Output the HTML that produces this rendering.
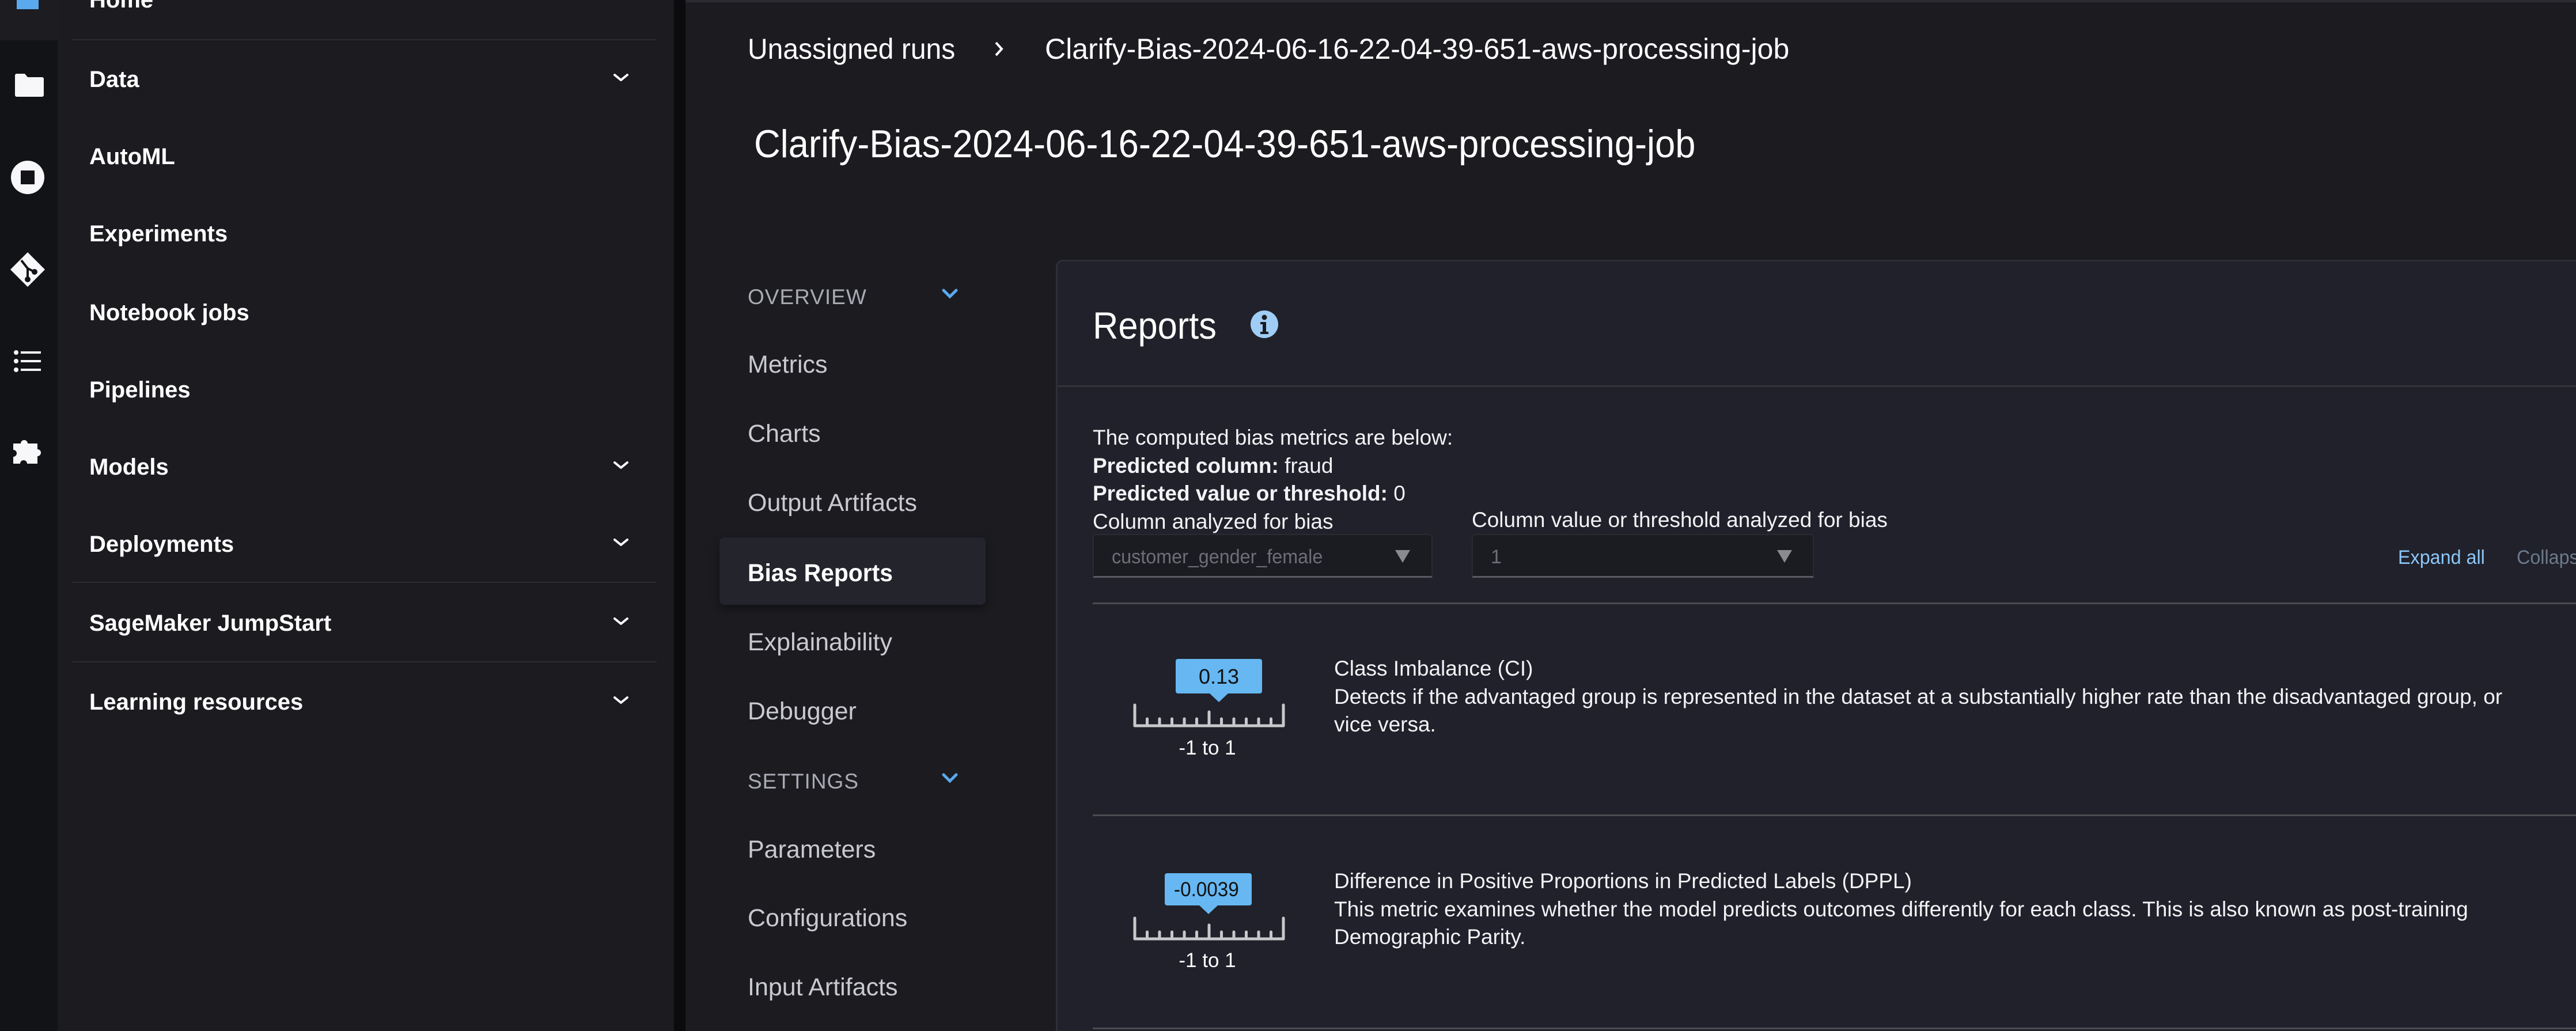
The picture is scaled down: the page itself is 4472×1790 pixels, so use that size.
<!DOCTYPE html>
<html style="overflow:hidden;width:4472px;height:1790px"><head><meta charset="utf-8">
<style>
*{margin:0;padding:0;box-sizing:border-box}
body{width:4472px;height:1790px;overflow:hidden;background:#1b1b20;font-family:"Liberation Sans",sans-serif;color:#f2f3f5;position:relative}
.a{position:absolute;white-space:nowrap;line-height:1}
.sq{transform-origin:0 0;display:inline-block}
.nav{font-weight:bold;font-size:40px;color:#fff;left:155px}
.ln{position:absolute;left:126px;width:1014px;height:2px;background:#2c2c32}
.sub{font-size:43px;color:#c9cad0;left:1298px}
.sec{font-size:37px;color:#a9abb3;left:1298px;letter-spacing:1px}
.dv{position:absolute;left:1897px;right:0;height:3px;background:#4a4b52}
</style></head><body>
<!-- icon strip -->
<div style="position:absolute;left:0;top:0;width:100px;height:1790px;background:#121316"></div>
<div style="position:absolute;left:0;top:0;width:100px;height:70px;background:#1c1c21"></div>
<div style="position:absolute;left:29px;top:0;width:38px;height:16px;background:#5aa9ef"></div>
<svg class="a" style="left:0;top:0" width="100" height="900">
 <g fill="#f7f7f9">
  <path d="M26 128 h17 l5 6 h25 a3 3 0 0 1 3 3 v28 a3 3 0 0 1 -3 3 h-44 a3 3 0 0 1 -3 -3 v-34 a3 3 0 0 1 3 -3z"/>
  <circle cx="48" cy="308" r="29"/>
  <path d="M48 438 L78 468 L48 498 L18 468Z"/>
  <circle cx="28" cy="612" r="4"/><circle cx="28" cy="627" r="4"/><circle cx="28" cy="642" r="4"/>
  <rect x="36" y="610" width="35" height="4"/><rect x="36" y="625" width="35" height="4"/><rect x="36" y="640" width="35" height="4"/>
  <path d="M23 770 h13 a6 6 0 1 1 12 0 h17 v10 a6 6 0 1 1 0 12 v13 h-18 a6 6 0 1 0 -12 0 h-12 v-12 a6 6 0 1 0 0 -12z"/>
 </g>
 <rect x="36" y="296" width="24" height="24" fill="#121316"/>
 <path d="M37 452 L48 466 M48 466 V484 M48 466 L60 472" stroke="#121316" stroke-width="4" fill="none"/>
 <circle cx="48" cy="485" r="5" fill="#121316"/><circle cx="60" cy="472" r="5" fill="#121316"/>
</svg>
<!-- sidebar -->
<div style="position:absolute;left:100px;top:0;width:1070px;height:1790px;background:#1b1b20"></div>
<div style="position:absolute;left:1170px;top:0;width:20px;height:1790px;background:#0b0b0d"></div>
<div class="a nav" style="top:-20px">Home</div>
<div class="ln" style="top:68px"></div>
<div class="a nav" style="top:118px">Data</div>
<div class="a nav" style="top:252px">AutoML</div>
<div class="a nav" style="top:386px">Experiments</div>
<div class="a nav" style="top:523px">Notebook jobs</div>
<div class="a nav" style="top:657px">Pipelines</div>
<div class="a nav" style="top:791px">Models</div>
<div class="a nav" style="top:925px">Deployments</div>
<div class="ln" style="top:1010px"></div>
<div class="a nav" style="top:1062px">SageMaker JumpStart</div>
<div class="ln" style="top:1148px"></div>
<div class="a nav" style="top:1199px">Learning resources</div>
<svg style="position:absolute;left:0;top:0" width="1170" height="1300">
 <g stroke="#fff" stroke-width="4" fill="none" stroke-linecap="round" stroke-linejoin="round">
  <path d="M1067 130 l11 9 l11 -9"/>
  <path d="M1067 803 l11 9 l11 -9"/>
  <path d="M1067 937 l11 9 l11 -9"/>
  <path d="M1067 1074 l11 9 l11 -9"/>
  <path d="M1067 1211 l11 9 l11 -9"/>
 </g>
</svg>
<!-- main header -->
<div style="position:absolute;left:1190px;top:0;right:0;height:4px;background:#2a2b31"></div>
<div class="a" style="left:1298px;top:60px;font-size:50px;color:#fff"><span class="sq" style="transform:scaleX(.96)">Unassigned runs</span></div>
<svg class="a" style="left:1724px;top:70px" width="20" height="30"><path d="M5 4 l10 11 l-10 11" stroke="#fff" stroke-width="4" fill="none"/></svg>
<div class="a" style="left:1814px;top:60px;font-size:50px;color:#fff">Clarify-Bias-2024-06-16-22-04-39-651-aws-processing-job</div>
<div class="a" style="left:1309px;top:216px;font-size:68px;color:#fff"><span class="sq" style="transform:scaleX(.93)">Clarify-Bias-2024-06-16-22-04-39-651-aws-processing-job</span></div>
<!-- sub nav -->
<div class="a sec" style="top:497px">OVERVIEW</div>
<div class="a sec" style="top:1338px">SETTINGS</div>
<svg style="position:absolute;left:1630px;top:490px" width="40" height="880"><g stroke="#5aa9ef" stroke-width="5" fill="none" stroke-linecap="round"><path d="M8 14 l11 11 l11 -11"/><path d="M8 855 l11 11 l11 -11"/></g></svg>
<div class="a sub" style="top:612px">Metrics</div>
<div class="a sub" style="top:732px">Charts</div>
<div class="a sub" style="top:852px">Output Artifacts</div>
<div style="position:absolute;left:1249px;top:933px;width:462px;height:117px;background:#23242c;border-radius:8px;box-shadow:0 6px 14px rgba(0,0,0,.35)"></div>
<div class="a sub" style="top:974px;color:#fff;font-weight:bold"><span class="sq" style="transform:scaleX(.95)">Bias Reports</span></div>
<div class="a sub" style="top:1094px">Explainability</div>
<div class="a sub" style="top:1214px">Debugger</div>
<div class="a sub" style="top:1454px">Parameters</div>
<div class="a sub" style="top:1573px">Configurations</div>
<div class="a sub" style="top:1693px">Input Artifacts</div>
<!-- card -->
<div style="position:absolute;left:1833px;top:451px;right:-10px;height:1400px;background:#20212a;border:3px solid #2d2e36;border-radius:12px"></div>
<div style="position:absolute;left:1836px;top:669px;right:0;height:3px;background:#33343c"></div>
<div class="a" style="left:1897px;top:532px;font-size:66px;color:#fff"><span class="sq" style="transform:scaleX(.93)">Reports</span></div>
<svg class="a" style="left:2171px;top:539px" width="48" height="48"><circle cx="24" cy="24" r="24" fill="#9fcdf6"/><circle cx="24" cy="12" r="4.5" fill="#1b1b20"/><path d="M17 20 h10 v17 h4 v4 h-14 v-4 h4 v-13 h-4z" fill="#1b1b20"/></svg>
<div class="a" style="left:1897px;top:736px;font-size:37px;line-height:48.5px">The computed bias metrics are below:<br><b>Predicted column:</b> fraud<br><b>Predicted value or threshold:</b> 0<br>Column analyzed for bias</div>
<div class="a" style="left:2555px;top:884px;font-size:37px">Column value or threshold analyzed for bias</div>
<div style="position:absolute;left:1897px;top:927px;width:590px;height:76px;background:#1b1c21;border:2px solid #2a2b31;border-bottom:3px solid #5a5b62;border-radius:6px 6px 0 0"></div>
<div class="a" style="left:1930px;top:950px;font-size:34px;color:#6e6f76"><span class="sq" style="transform:scaleX(.95)">customer_gender_female</span></div>
<svg class="a" style="left:2420px;top:952px" width="30" height="26"><path d="M2 3 h26 l-13 22z" fill="#8a8b90"/></svg>
<div style="position:absolute;left:2555px;top:927px;width:594px;height:76px;background:#1b1c21;border:2px solid #2a2b31;border-bottom:3px solid #5a5b62;border-radius:6px 6px 0 0"></div>
<div class="a" style="left:2588px;top:950px;font-size:34px;color:#6e6f76">1</div>
<svg class="a" style="left:3083px;top:952px" width="30" height="26"><path d="M2 3 h26 l-13 22z" fill="#8a8b90"/></svg>
<div class="a" style="left:4163px;top:951px;font-size:34px;color:#8cc6f8"><span class="sq" style="transform:scaleX(.95)">Expand all</span></div>
<div class="a" style="left:4369px;top:951px;font-size:34px;color:#6b7a8c"><span class="sq" style="transform:scaleX(.95)">Collapse all</span></div>
<div class="dv" style="top:1046px"></div>
<div class="dv" style="top:1414px"></div>
<div class="dv" style="top:1784px"></div>
<!-- metric 1 -->
<div style="position:absolute;left:2041px;top:1144px;width:150px;height:60px;background:#66b7f2;border-radius:4px"></div>
<svg class="a" style="left:2099px;top:1203px" width="34" height="17"><path d="M0 0 h34 l-17 16z" fill="#66b7f2"/></svg>
<div class="a" style="left:2041px;top:1157px;width:150px;text-align:center;font-size:36px;color:#111">0.13</div>
<svg class="a" style="left:1966px;top:1220px" width="266" height="44"><g stroke="#c8c8cc" stroke-width="5" stroke-linecap="round"><path d="M4 40 H262"/><path d="M4 4 V40 M262 4 V40 M133 16 V40 M25.5 28V40 M47 28V40 M68.5 28V40 M90 28V40 M111.5 28V40 M154.5 28V40 M176 28V40 M197.5 28V40 M219 28V40 M240.5 28V40"/></g></svg>
<div class="a" style="left:1996px;top:1281px;width:200px;text-align:center;font-size:35px;color:#fff">-1 to 1</div>
<div class="a" style="left:2316px;top:1137px;font-size:37px;line-height:48.5px">Class Imbalance (CI)<br>Detects if the advantaged group is represented in the dataset at a substantially higher rate than the disadvantaged group, or<br>vice versa.</div>
<!-- metric 2 -->
<div style="position:absolute;left:2022px;top:1516px;width:151px;height:56px;background:#66b7f2;border-radius:4px"></div>
<svg class="a" style="left:2081px;top:1571px" width="34" height="17"><path d="M0 0 h34 l-17 16z" fill="#66b7f2"/></svg>
<div class="a" style="left:2022px;top:1527px;width:151px;text-align:center;font-size:35px;color:#111"><span class="sq" style="transform:scaleX(.95)">-0.0039</span></div>
<svg class="a" style="left:1966px;top:1590px" width="266" height="44"><g stroke="#c8c8cc" stroke-width="5" stroke-linecap="round"><path d="M4 40 H262"/><path d="M4 4 V40 M262 4 V40 M133 16 V40 M25.5 28V40 M47 28V40 M68.5 28V40 M90 28V40 M111.5 28V40 M154.5 28V40 M176 28V40 M197.5 28V40 M219 28V40 M240.5 28V40"/></g></svg>
<div class="a" style="left:1996px;top:1650px;width:200px;text-align:center;font-size:35px;color:#fff">-1 to 1</div>
<div class="a" style="left:2316px;top:1506px;font-size:37px;line-height:48.5px">Difference in Positive Proportions in Predicted Labels (DPPL)<br>This metric examines whether the model predicts outcomes differently for each class. This is also known as post-training<br>Demographic Parity.</div>
</body></html>
